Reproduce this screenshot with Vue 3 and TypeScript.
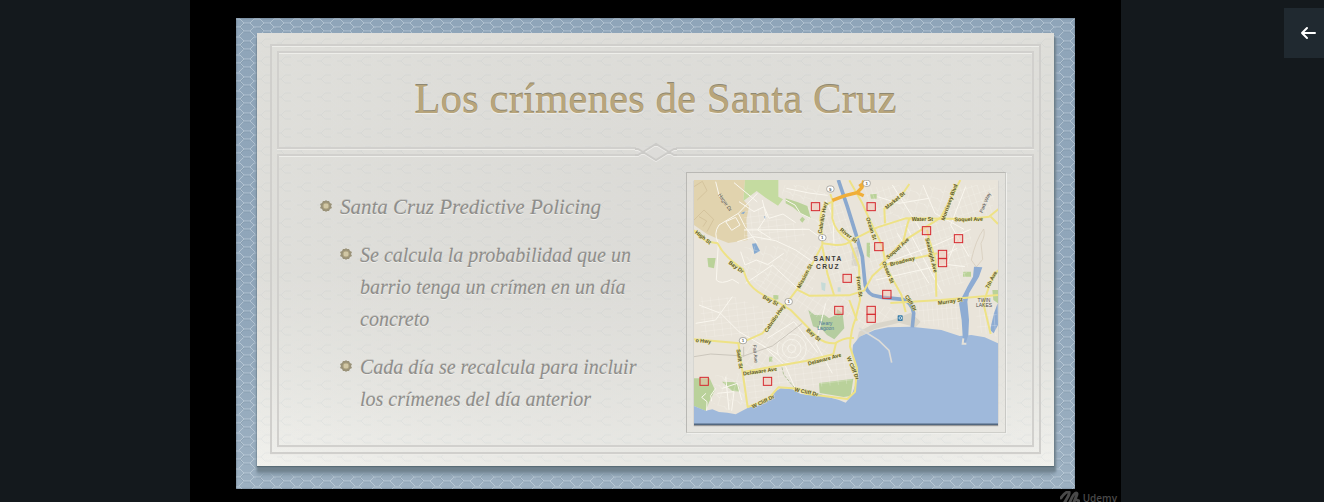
<script setup lang="ts">
interface Point { x: number; y: number }
interface MapLabel extends Point { text: string; angle: number }
interface StreetArea { points: string; pattern: string }

const topics: string[] = [
  'Se calcula la probabilidad que un barrio tenga un crímen en un día concreto',
  'Cada día se recalcula para incluir los crímenes del día anterior',
]

const markers: Point[] = [
  { x: 390, y: 110 }, { x: 557, y: 110 }, { x: 723, y: 182 }, { x: 819, y: 206 },
  { x: 580, y: 230 }, { x: 771, y: 253 }, { x: 771, y: 278 }, { x: 485, y: 325 },
  { x: 604, y: 373 }, { x: 460, y: 421 }, { x: 557, y: 421 }, { x: 557, y: 445 },
  { x: 56, y: 634 }, { x: 246, y: 634 },
]

const labels: MapLabel[] = [
  { text: 'High St', x: 52, y: 203, angle: 38 },
  { text: 'Bay Dr', x: 151, y: 292, angle: 36 },
  { text: 'Bay St', x: 254, y: 392, angle: 28 },
  { text: 'Mission St', x: 358, y: 319, angle: -62 },
  { text: 'Cabrillo Hwy', x: 412, y: 143, angle: -80 },
  { text: 'River St', x: 488, y: 197, angle: 38 },
  { text: 'Ocean St', x: 556, y: 176, angle: 72 },
  { text: 'Ocean St', x: 606, y: 307, angle: 68 },
  { text: 'Market St', x: 629, y: 92, angle: -40 },
  { text: 'Water St', x: 710, y: 150, angle: 0 },
  { text: 'Soquel Ave', x: 849, y: 149, angle: -1 },
  { text: 'Soquel Ave', x: 637, y: 236, angle: -42 },
  { text: 'Broadway', x: 650, y: 275, angle: -15 },
  { text: 'Morrissey Blvd', x: 792, y: 97, angle: -70 },
  { text: 'Seabright Ave', x: 736, y: 256, angle: 76 },
  { text: 'Front St', x: 520, y: 350, angle: 82 },
  { text: 'Cliff Dr', x: 675, y: 400, angle: 58 },
  { text: 'Murray St', x: 794, y: 395, angle: -8 },
  { text: '7th Ave', x: 918, y: 330, angle: -62 },
  { text: 'Cabrillo Hwy', x: 268, y: 446, angle: -55 },
  { text: 'Bay St', x: 383, y: 495, angle: 40 },
  { text: 'o Hwy', x: 53, y: 514, angle: 5 },
  { text: 'Swift St', x: 161, y: 567, angle: 82 },
  { text: 'Delaware Ave', x: 223, y: 605, angle: -8 },
  { text: 'Delaware Ave', x: 417, y: 569, angle: -15 },
  { text: 'W Cliff Dr', x: 233, y: 696, angle: -26 },
  { text: 'W Cliff Dr', x: 362, y: 667, angle: 13 },
  { text: 'W Cliff Dr', x: 501, y: 595, angle: 68 },
]

const shields: (Point & { text: string })[] = [
  { x: 434, y: 57, text: '9' }, { x: 410, y: 203, text: '1' },
  { x: 309, y: 395, text: '1' }, { x: 172, y: 512, text: '1' },
  { x: 543, y: 40, text: '1' },
]

const streetAreas: StreetArea[] = [
  { points: '200,350 350,225 405,230 380,370 500,380 500,440 380,440 290,385', pattern: 'streets-west' },
  { points: '175,95 300,150 370,180 340,215 175,210', pattern: 'streets-fine' },
  { points: '290,45 410,45 430,110 400,175 360,160 370,100 290,80', pattern: 'streets-wide' },
  { points: '175,230 330,225 230,350 175,320', pattern: 'streets-wide' },
  { points: '440,50 505,190 540,300 500,360 420,320 410,180', pattern: 'streets-east' },
  { points: '530,55 640,45 670,80 600,150 550,120', pattern: 'streets-east' },
  { points: '660,55 800,45 770,130 680,145 610,160', pattern: 'streets-wide' },
  { points: '820,45 930,45 920,130 840,160 770,160', pattern: 'streets-east' },
  { points: '550,150 690,155 760,140 760,380 610,375 550,340', pattern: 'streets-east' },
  { points: '760,165 855,180 860,250 835,340 760,350', pattern: 'streets-east' },
  { points: '690,400 825,398 820,480 705,460', pattern: 'streets-harbor' },
  { points: '870,400 932,405 935,500 875,485', pattern: 'streets-harbor' },
  { points: '45,380 145,380 270,430 220,500 45,500', pattern: 'streets-fine' },
  { points: '175,525 290,415 425,520 435,560 320,590 180,600', pattern: 'streets-west' },
  { points: '170,610 490,560 500,640 360,655 285,640 200,700', pattern: 'streets-fine' },
  { points: '90,615 165,610 185,700 120,720 75,695', pattern: 'streets-wide' },
  { points: '505,430 540,400 665,420 600,450 520,480', pattern: 'streets-west' },
]

const minorRoads: string[] = [
  'M145 38 L215 96 M215 70 L158 130 L100 165 Q82 190 98 220 L92 330 Q105 345 140 328 L160 340',
  'M158 130 L178 170 L215 220 M120 155 L150 142 L163 165 L138 181Z M90 35 L100 75 L120 105',
  'M155 215 L205 200 L270 212 L330 240 L395 285 M175 180 L370 178 L400 200',
  'M160 95 L205 125 L235 110 L250 145 L292 132 L330 158 M230 90 L242 140 L216 180 L255 205',
  'M165 245 L178 285 L212 270 L246 284 L294 250 M180 340 L260 285 L352 370',
  'M300 90 L328 105 L344 130 L375 145 M302 55 L370 69 L426 76 M420 90 L442 140 L445 230',
  'M30 460 L90 450 L140 380 M40 405 L105 430 L160 485 L280 555',
  'M110 655 L155 640 L168 690 M95 670 L145 665 L138 722 M120 620 L130 720',
  'M245 505 L325 455 L396 548 M230 525 L300 590 L330 658 M420 400 L390 520 L440 610',
  'M575 80 L640 100 L730 85 M620 45 L690 155 L733 230 M712 45 L748 130 L835 178',
  'M660 165 L770 370 M635 190 L730 340 M595 280 L750 225 L855 178 M570 330 L780 283 L838 290',
  'M840 50 L795 165 L850 260 M820 190 L780 290 M785 250 L815 235',
]

const yellowRoads: string[] = [
  'M25 180 Q48 216 96 220 Q115 260 172 298 L184 330 Q205 367 258 386 L315 420 L398 504 Q417 521 448 520 Q473 502 505 504',
  'M434 72 L442 95 Q406 104 404 146 L410 203 L410 225 L350 337 L300 403 L261 455 L230 490 L163 520 L25 508',
  'M440 92 L440 145 Q448 186 492 214 L520 288 L523 390 L510 445 Q495 480 493 530 L514 595 L508 665 L485 687 L360 671 L340 656 L278 652 L245 690 L186 711 L158 520',
  'M410 220 L450 225 Q480 227 502 209 L575 172 L660 145 L850 147 L910 140 L940 116',
  'M410 229 L425 310 L445 375 M333 358 L370 377 L490 376 L535 362 L560 318 L595 286 L755 250',
  'M491 31 L530 100 L554 154 L591 230 L601 292 L647 374 L660 426',
  'M598 160 L596 116 L642 84 L671 42 M582 287 L651 215 L766 142 L824 30',
  'M654 210 L665 164 L671 146 M724 179 L731 210 L750 270 L752 380',
  'M614 399 L765 390 L937 375 M937 300 L914 338 L893 400 L915 492',
  'M177 605 L360 573 L443 553 L451 519 M915 140 L937 162 M491 390 L514 452',
]
</script>

<template>
  <main class="page">
    <section class="stage" aria-label="Video">
      <article class="slide">
        <svg class="texture" aria-hidden="true">
          <defs>
            <pattern id="lattice" width="20" height="18" patternUnits="userSpaceOnUse">
              <path d="M0 9H4L8 5H14L18 9H20M8 5L4 1H0M14 5L18 1H20M4 9L8 13H14L18 9M8 13L3 18M14 13L19 18" fill="none" stroke="#e0eaf0" stroke-width="1" opacity=".42" />
              <path d="M0 10H4L8 6H14M4 10L8 14H14" fill="none" stroke="#667e91" stroke-width="1" opacity=".25" />
            </pattern>
          </defs>
          <rect width="100%" height="100%" fill="url(#lattice)" />
        </svg>
        <div class="paper">
          <svg class="texture faint" aria-hidden="true"><rect width="100%" height="100%" fill="url(#lattice)" /></svg>
          <div class="frame">
            <header class="panel heading">
              <h1>Los crímenes de Santa Cruz</h1>
            </header>
            <div class="divider" aria-hidden="true">
              <svg class="ornament" viewBox="0 0 42 20">
                <path class="cover" d="M1 5 H41 V15 H1Z" />
                <path class="light" d="M0 8 H3 L8 11 L21 19 L34 11 L39 8 H42 M0 14 H3 L8 11 L21 3 L34 11 L39 14 H42" />
                <path class="dark" d="M0 7 H3 L8 10 L21 18 L34 10 L39 7 H42 M0 13 H3 L8 10 L21 2 L34 10 L39 13 H42" />
              </svg>
            </div>
            <div class="panel content">
              <ul class="topics">
                <li>
                  <svg class="bullet" viewBox="0 0 12 12" aria-hidden="true"><path d="M6 0 L7 1 L9 1 L10 3 L12 4 L11 6 L12 8 L10 9 L9 11 L7 11 L6 12 L5 11 L3 11 L2 9 L0 8 L1 6 L0 4 L2 3 L3 1 L5 1Z" /><circle cx="6" cy="6" r="3" /></svg>
                  <span>Santa Cruz Predictive Policing</span>
                </li>
                <li v-for="topic in topics" :key="topic" class="nested">
                  <svg class="bullet" viewBox="0 0 12 12" aria-hidden="true"><path d="M6 0 L7 1 L9 1 L10 3 L12 4 L11 6 L12 8 L10 9 L9 11 L7 11 L6 12 L5 11 L3 11 L2 9 L0 8 L1 6 L0 4 L2 3 L3 1 L5 1Z" /><circle cx="6" cy="6" r="3" /></svg>
                  <span>{{ topic }}</span>
                </li>
              </ul>
              <figure class="map-frame">
                <svg class="map" viewBox="25 30 912 735" role="img" aria-label="Santa Cruz">
                  <defs>
                    <pattern id="streets-west" width="19" height="27" patternUnits="userSpaceOnUse" patternTransform="rotate(34)"><path d="M0 0H19M0 0V27" /></pattern>
                    <pattern id="streets-east" width="17" height="24" patternUnits="userSpaceOnUse" patternTransform="rotate(-18)"><path d="M0 0H17M0 0V24" /></pattern>
                    <pattern id="streets-wide" width="33" height="28" patternUnits="userSpaceOnUse" patternTransform="rotate(17)"><path d="M0 0H20L33 8M0 0V28" /></pattern>
                    <pattern id="streets-fine" width="25" height="18" patternUnits="userSpaceOnUse" patternTransform="rotate(-7)"><path d="M0 0H25M0 0V18" /></pattern>
                    <pattern id="streets-harbor" width="14" height="32" patternUnits="userSpaceOnUse" patternTransform="rotate(-5)"><path d="M0 0H14M0 0V32" /></pattern>
                  </defs>
                  <rect x="25" y="30" width="912" height="735" fill="#e9e4da" />
                  <path d="M25 30H178L173 90L190 109L182 150L186 210L128 219L105 210L65 193L25 165Z" fill="#e1d3ae" />
                  <path d="M25 50L50 34L64 62L35 90M25 150L55 120L84 148L64 185M40 140L63 153L52 170" fill="none" stroke="#cdbb94" stroke-width="2" />
                  <path d="M178 30H278V80L292 88L277 107L240 83L213 63L173 93Z" fill="#c4dba0" />
                  <path d="M300 85L337 97L365 108L376 146L346 132L322 112L300 100ZM350 140L358 148L350 158L342 149ZM65 264H90L85 295L68 291ZM553 72H573V86H556ZM543 218H553V265L543 258ZM832 305H856V320H832ZM920 360H937V400L923 390ZM263 375H278V388L263 391Z" fill="#bad299" />
                  <path d="M368 420L387 435L416 434L430 445L452 434L454 417L471 430L476 475L446 508L424 495L410 479L382 469Z" fill="#b5cda0" />
                  <path d="M25 625H72L88 660L70 697L60 723L25 708ZM109 635L151 637L161 650V665L138 662ZM400 639L503 626L495 678L474 681L402 669ZM250 560H260V575H250Z" fill="#b9d19a" />
                  <path d="M499 235L517 230L522 292L498 286ZM675 428L705 455L690 472L640 458L567 477L522 500L510 525L520 485L562 462L620 450Z" fill="#d9d5ca" />
                  <path d="M894 177Q870 210 857 270L872 291L891 268L886 220Q900 195 894 177" fill="none" stroke="#d3c9b6" stroke-width="2" />
                  <path d="M199 221L211 220L223 243L206 252ZM165 130L180 123L174 132ZM235 137L242 143L238 148Z" fill="#85a9d0" />
                  <path d="M406 337L420 340L418 364L408 359ZM456 352H465V365H456Z" fill="#c6dbd7" />
                  <path d="M936 400L925 430L913 480L924 490L937 465Z" fill="#8eacd3" />
                  <g class="street-fill"><polygon v-for="(area, index) in streetAreas" :key="index" :points="area.points" :fill="`url(#${area.pattern})`" /></g>
                  <g class="street-curves"><circle cx="318" cy="536" r="12" /><circle cx="318" cy="536" r="28" /><circle cx="318" cy="536" r="44" /></g>
                  <path v-for="road in minorRoads" :key="road" class="minor" :d="road" />
                  <path d="M25 560L75 552L174 558L260 528L350 460M174 530L174 560" fill="none" stroke="#cbc6bc" stroke-width="3" />
                  <path d="M289 592L294 614L330 658" fill="none" stroke="#b7c6a0" stroke-width="3" stroke-dasharray="9 4" />
                  <path d="M25 708L60 722L80 718L100 726L125 728L150 733L170 722L190 712L215 708L245 693L262 680L265 667L285 655L320 658L345 672L375 675L405 673L430 682L460 690L480 698L497 678L507 650L519 615L512 585L499 555L502 525L522 500L567 480L607 472L677 470L767 480L822 498L857 495L897 502L937 520V765H25Z" fill="#9fb9db" />
                  <path d="M458 30L485 110L510 190L530 260L537 330Q538 365 562 376L590 382L650 388Q680 397 684 430L680 472" class="river" />
                  <path d="M865 290L890 292L880 320L850 370L845 395L850 450L848 495L840 520L832 515L828 450L820 400L845 350L862 320Z" fill="#8eacd3" />
                  <path d="M833 505L831 521L842 521" fill="none" stroke="#e5e1d8" stroke-width="6" />
                  <path v-for="road in yellowRoads" :key="road" class="yellow" :d="road" />
                  <path d="M440 91L478 77L514 68L529 52L534 32M514 68L534 77M529 52L522 42" fill="none" stroke="#f0ae38" stroke-width="10" />
                  <path d="M520 474L580 512L610 541L618 578" fill="none" stroke="#dcdbd7" stroke-width="5" />
                  <path d="M90 655L75 677L78 694M61 670L48 682L64 695L63 722" class="minor" />
                  <g class="labels">
                    <text v-for="(label, index) in labels" :key="index" :transform="`translate(${label.x} ${label.y}) rotate(${label.angle})`">{{ label.text }}</text>
                  </g>
                  <g class="plain-labels">
                    <text transform="translate(114 100) rotate(56)">Hagar Dr</text>
                    <text transform="translate(903 100) rotate(-67)">Park Way</text>
                    <text transform="translate(204 552) rotate(84)">Fair Ave</text>
                    <text x="895" y="397">TWIN</text><text x="895" y="411">LAKES</text>
                  </g>
                  <g class="city"><text x="427" y="273">SANTA</text><text x="427" y="296">CRUZ</text></g>
                  <g class="lagoon"><text x="420" y="464">Neary</text><text x="420" y="479">Lagoon</text></g>
                  <g class="shields"><g v-for="(shield, index) in shields" :key="index"><rect :x="shield.x - 11" :y="shield.y - 9" width="22" height="18" rx="8" /><text :x="shield.x" :y="shield.y + 5">{{ shield.text }}</text></g></g>
                  <rect x="636" y="436" width="15" height="17" rx="2" fill="#357ba7" /><circle cx="644" cy="444" r="4" fill="none" stroke="#fff" stroke-width="2" />
                  <g class="markers"><rect v-for="(marker, index) in markers" :key="index" :x="marker.x - 13" :y="marker.y - 12" width="25" height="24" /></g>
                  <path d="M25 763H937" stroke="#52677f" stroke-width="5" />
                </svg>
              </figure>
            </div>
          </div>
        </div>
      </article>
      <div class="watermark">
        <svg viewBox="0 0 20 16" aria-hidden="true"><path d="M1 7Q6 0 9 1Q10 3 6 9L2 16M8 16Q13 2 16 2Q18 2 16 6L12 16M17 9L19 10" /></svg>
        <span>Udemy</span>
      </div>
    </section>
    <button class="back" type="button" aria-label="Volver">
      <svg viewBox="0 0 16 14" aria-hidden="true"><path d="M7 2L2 7L7 12M2 7H15" /></svg>
    </button>
  </main>
</template>

<style>
body { margin: 0; background: #14191d; }
</style>

<style scoped>
* { box-sizing: border-box; }
.page { display: grid; grid-template-columns: 190fr 931fr 203fr; height: 100vh; overflow: hidden; background: #14191d; }
.stage { grid-column: 2; position: relative; overflow: hidden; padding: 18px 46px 13px; background: #000; }
.slide { position: relative; padding: 15px 21px 23px; background: linear-gradient(180deg, #8fa5b9, #90a6ba 60%, #9cb0c1); box-shadow: inset 0 0 2px #526474; }
.texture { position: absolute; inset: 0; width: 100%; height: 100%; pointer-events: none; }
.faint { opacity: .22; }
.paper { position: relative; padding: 11px 13px 12px; background: radial-gradient(ellipse at 50% 35%, rgba(219,218,214,.8), rgba(223,222,218,.5) 65%, transparent 100%), linear-gradient(#deded9 0 55%, #f1f1ed 100%); box-shadow: 0 1px 1px #596c76, 1px 5px 2px 1px #71838f, 0 9px 4px #8295a5; }
.frame { position: relative; padding: 5px; border: 2px solid #d0cfcc; box-shadow: 0 1px 0 #ecebe7, inset 0 1px 0 #eeeeea; }
.panel { border: 2px solid #d1d0cd; box-shadow: 0 1px 0 #ecebe7, inset 0 1px 0 #eeeeea; }
.heading { padding: 17px 10px 19px; }
h1 { margin: 0; color: #b8a57b; font: 400 43px/58px "Liberation Serif", serif; text-align: center; white-space: nowrap; text-shadow: 0 -1px 0 #8e8873, 0 1px 1px #eeeeea; }
.divider { position: relative; height: 5px; }
.ornament { position: absolute; z-index: 1; left: 50%; top: 50%; width: 42px; height: 20px; transform: translate(-50%, -50%); }
.ornament path { fill: none; stroke-width: 2; }
.ornament .cover { fill: #dddcd9; }
.ornament .light { stroke: #edece9; }
.ornament .dark { stroke: #cccbc8; }
.content { display: grid; grid-template-columns: 407fr 320fr; padding: 16px 26px 12px 0; }
.topics { margin: 0; padding: 19px 36px 0 41px; list-style: none; color: #8e8d8a; font: italic 400 21px/32px "Liberation Serif", serif; text-shadow: 0 1px 0 #efefec, 0 -1px 0 rgba(105,105,100,.25); }
.topics li { display: flex; gap: 8px; margin-bottom: 16px; }
.topics li:last-child { margin-bottom: 0; }
.topics .nested { margin-left: 20px; font-size: 20px; }
.bullet { flex: 0 0 12px; width: 12px; height: 12px; margin-top: 9px; }
.bullet path { fill: #9a9278; }
.bullet circle { fill: #d1c7a5; stroke: #b2a783; }
.map-frame { margin: 0; align-self: start; padding: 7px; border: 1px solid #b9b8b4; border-right-color: #c9c9c5; border-bottom-color: #cfcfca; background: rgba(229,228,222,.5); box-shadow: 1px 1px 0 #f0f0ed; }
.map { display: block; width: 100%; height: auto; font-family: "Liberation Sans", Arial, sans-serif; box-shadow: 0 1px 1px #999; }
.map pattern path, .street-curves { fill: none; stroke: #fbf9f2; stroke-width: 2; }
.street-fill { opacity: .7; }
.minor { fill: none; stroke: #faf7ef; stroke-width: 3; stroke-linejoin: round; }
.yellow { fill: none; stroke: #eee285; stroke-width: 6; stroke-linejoin: round; }
.river { fill: none; stroke: #8aa8ce; stroke-width: 11; }
.labels text, .plain-labels text, .lagoon text, .city text, .shields text { text-anchor: middle; }
.labels { fill: #5a562e; font-size: 16px; font-weight: 700; paint-order: stroke; stroke: #eee79b; stroke-width: 2px; }
.labels text { dominant-baseline: middle; }
.plain-labels { fill: #4c4b48; font-size: 15px; }
.city { fill: #3b3936; stroke: #eee9df; stroke-width: 2px; paint-order: stroke; font-size: 20px; font-weight: 700; letter-spacing: 4px; }
.lagoon { fill: #49769a; font-size: 15px; }
.shields rect { fill: #fff; stroke: #8b8983; stroke-width: 2; }
.shields text { fill: #565654; font-size: 13px; font-weight: 700; }
.markers rect { fill: rgba(246,190,174,.4); stroke: #d6272d; stroke-width: 3; }
.watermark { position: absolute; right: 4px; bottom: -5px; display: flex; align-items: flex-start; gap: 3px; color: #494949; font: 600 10px/14px "Open Sans", sans-serif; }
.watermark svg { width: 20px; height: 16px; }
.watermark path { fill: none; stroke: currentColor; stroke-width: 3; stroke-linecap: round; }
.back { justify-self: end; display: grid; place-items: center end; width: 40px; height: 50px; margin: 8px 0 0; padding: 0 8px 0 0; border: 0; background: #202930; color: #fff; }
.back svg { width: 16px; height: 14px; }
.back path { fill: none; stroke: currentColor; stroke-width: 2; stroke-linecap: round; stroke-linejoin: round; }
</style>
